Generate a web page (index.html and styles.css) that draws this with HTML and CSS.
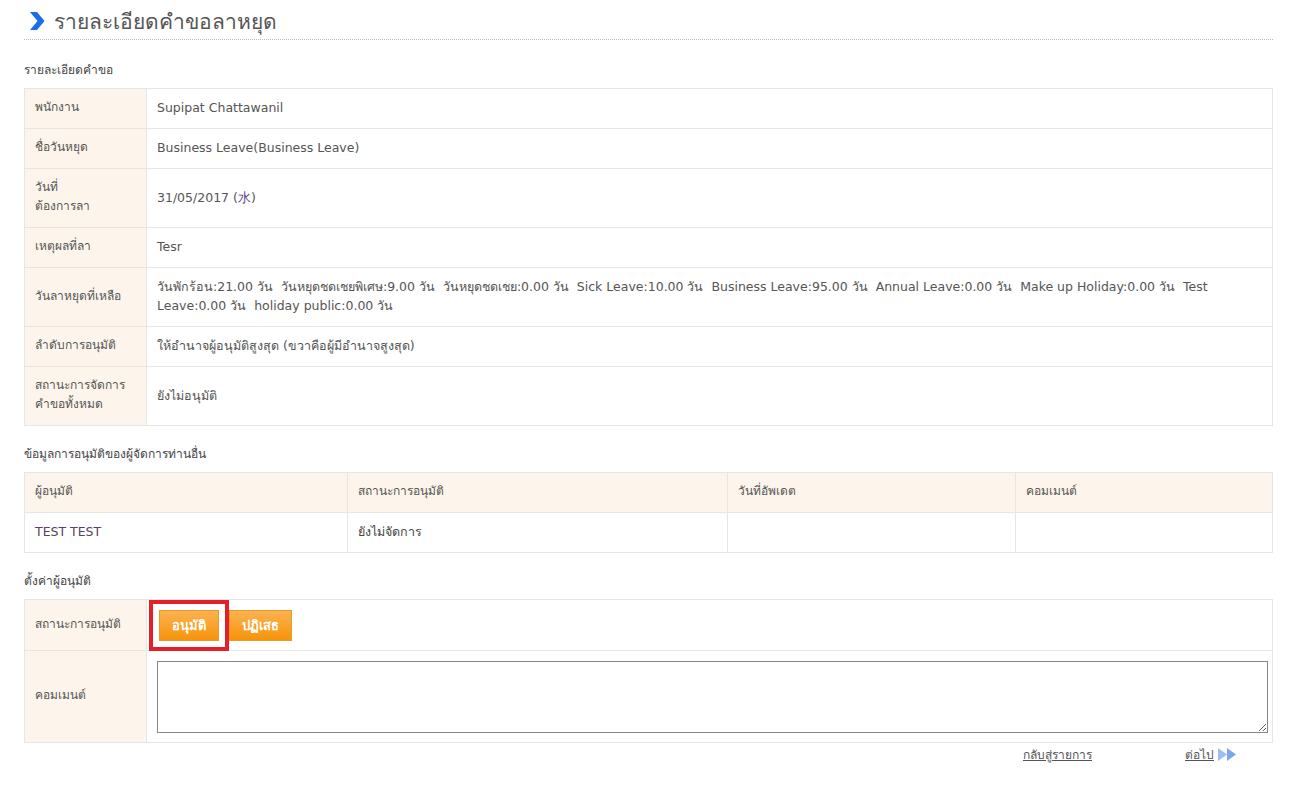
FILE: index.html
```html
<!DOCTYPE html>
<html lang="th">
<head>
<meta charset="utf-8">
<title>รายละเอียดคำขอลาหยุด</title>
<link rel="stylesheet" href="styles.css">
</head>
<body>
<div class="page">
  <h1 class="title">
    <svg class="chev" width="15" height="18" viewBox="0 0 15 18"><path d="M0 0 L7 0 L14.5 9 L7 18 L0 18 L7.5 9 Z" fill="#1b6fe6"/></svg>
    <span>รายละเอียดคำขอลาหยุด</span>
  </h1>

  <div class="sec-label">รายละเอียดคำขอ</div>
  <table class="detail">
    <tr><th>พนักงาน</th><td>Supipat Chattawanil</td></tr>
    <tr><th>ชื่อวันหยุด</th><td>Business Leave(Business Leave)</td></tr>
    <tr><th>วันที่<br>ต้องการลา</th><td>31/05/2017 (<span class="wd">水</span>)</td></tr>
    <tr><th>เหตุผลที่ลา</th><td>Tesr</td></tr>
    <tr><th>วันลาหยุดที่เหลือ</th><td>วันพักร้อน:21.00 วัน&nbsp; วันหยุดชดเชยพิเศษ:9.00 วัน&nbsp; วันหยุดชดเชย:0.00 วัน&nbsp; Sick Leave:10.00 วัน&nbsp; Business Leave:95.00 วัน&nbsp; Annual Leave:0.00 วัน&nbsp; Make up Holiday:0.00 วัน&nbsp; Test Leave:0.00 วัน&nbsp; holiday public:0.00 วัน</td></tr>
    <tr><th>ลำดับการอนุมัติ</th><td>ให้อำนาจผู้อนุมัติสูงสุด (ขวาคือผู้มีอำนาจสูงสุด)</td></tr>
    <tr><th>สถานะการจัดการ<br>คำขอทั้งหมด</th><td>ยังไม่อนุมัติ</td></tr>
  </table>

  <div class="sec-label">ข้อมูลการอนุมัติของผู้จัดการท่านอื่น</div>
  <table class="others">
    <colgroup><col class="c1"><col class="c2"><col class="c3"><col class="c4"></colgroup>
    <tr><th>ผู้อนุมัติ</th><th>สถานะการอนุมัติ</th><th>วันที่อัพเดต</th><th>คอมเมนต์</th></tr>
    <tr><td class="name">TEST TEST</td><td>ยังไม่จัดการ</td><td></td><td></td></tr>
  </table>

  <div class="sec-label">ตั้งค่าผู้อนุมัติ</div>
  <table class="detail setting">
    <tr class="st"><th>สถานะการอนุมัติ</th><td class="btns"><button class="btn hl">อนุมัติ</button><button class="btn">ปฏิเสธ</button></td></tr>
    <tr class="cm"><th>คอมเมนต์</th><td><textarea class="ta"></textarea></td></tr>
  </table>

  <div class="footer">
    <a href="#" class="lnk">กลับสู่รายการ</a>
    <a href="#" class="lnk next">ต่อไป <svg width="20" height="13" viewBox="0 0 20 13"><path d="M1 0 L10 6.5 L1 13 Z" fill="#9cbdf0"/><path d="M10 0 L19 6.5 L10 13 Z" fill="#7aa6ea"/></svg></a>
  </div>
</div>
</body>
</html>
```
FILE: styles.css
```css
html, body { margin: 0; padding: 0; background: #fff; }
body { font-family: Tahoma, "DejaVu Sans", "Noto Sans", sans-serif; font-size: 12px; color: #444; }
.page { padding: 0 24px 30px; }
.title { margin: 0; padding: 10px 0 7px 6px; display: flex; align-items: center; gap: 9px; font-weight: normal; font-size: 21px; color: #555; border-bottom: 1px dotted #bbb; height: 22px; }
.chev { display: block; }
.sec-label { font-size: 12px; color: #444; padding: 21px 0 9px; line-height: 18px; }
.detail + .sec-label { padding-top: 19px; }
.others + .sec-label { padding-top: 19px; }
table { border-collapse: collapse; width: 100%; }
th, td { border: 1px solid #e6e6e6; padding: 9px 10px 11px; line-height: 19px; text-align: left; font-weight: normal; vertical-align: middle; font-size: 12.5px; }
.detail th { width: 101px; background: #fdf5ec; color: #555; font-size: 12px; }
.detail td { color: #555; }
.wd { color: #5a3d8a; }
.others th { background: #fdf5ec; color: #555; font-size: 12px; }
.others td { height: 19px; }
.c1 { width: 323px; } .c2 { width: 380px; } .c3 { width: 288px; }
.name { color: #5b3f66; }
.st th { height: 30px; }
.btns { padding: 9px 10px 9px 12px; }
.btn { font-family: Tahoma, "DejaVu Sans", sans-serif; font-size: 13px; font-weight: bold; color: #fff; background: linear-gradient(#fcb34f, #f7930a); border: 1px solid #e39a30; padding: 0 12px; height: 31px; cursor: pointer; vertical-align: middle; margin-right: 10px; }
.hl { position: relative; outline: 4px solid #e41f28; outline-offset: 6px; }
.cm th { height: 71px; }
.cm td { padding: 10px 4px 9px 10px; }
.ta { display: block; width: 100%; box-sizing: border-box; height: 72px; border: 1px solid #888; resize: both; margin: 0; }
.footer { display: flex; justify-content: flex-end; gap: 93px; padding: 2px 36px 0 0; font-size: 12px; }
.lnk { color: #555; text-decoration: underline; display: inline-flex; align-items: center; }
.next svg { margin-left: 3px; }
```
